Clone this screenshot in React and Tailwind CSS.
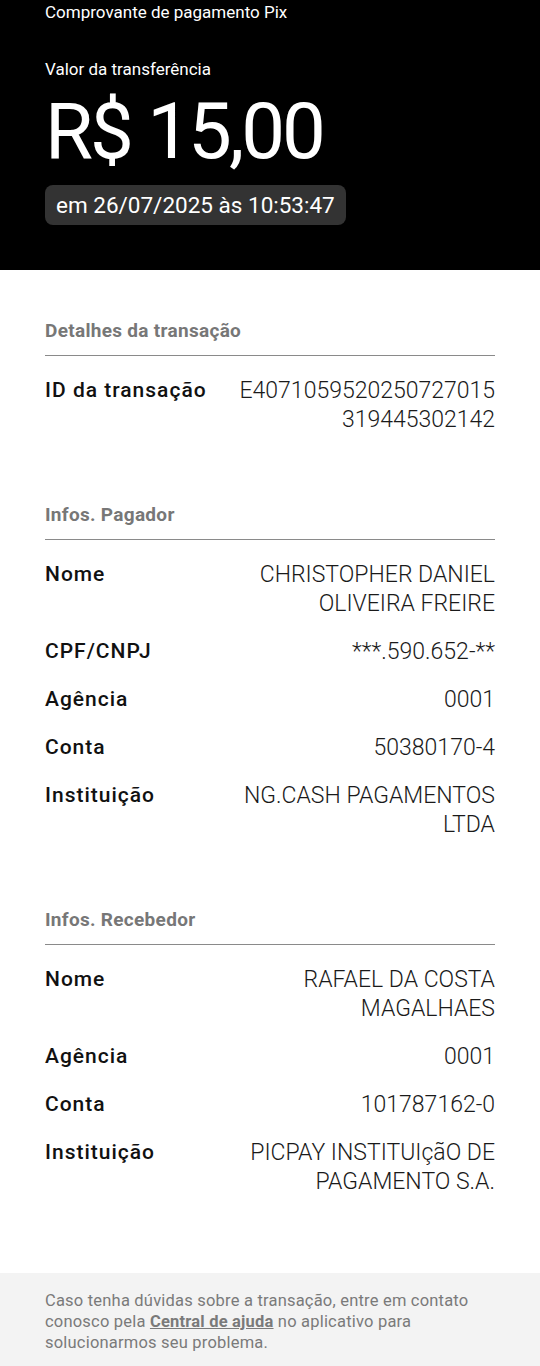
import React from "react";

const sections = [
  {
    title: "Detalhes da transação",
    rows: [{ label: "ID da transação", value: "E407105952025072701531944530 2142".replace(" ", ""), breakAll: true }],
  },
  {
    title: "Infos. Pagador",
    rows: [
      { label: "Nome", value: "CHRISTOPHER DANIEL OLIVEIRA FREIRE" },
      { label: "CPF/CNPJ", value: "***.590.652-**" },
      { label: "Agência", value: "0001" },
      { label: "Conta", value: "50380170-4" },
      { label: "Instituição", value: "NG.CASH PAGAMENTOS LTDA" },
    ],
  },
  {
    title: "Infos. Recebedor",
    rows: [
      { label: "Nome", value: "RAFAEL DA COSTA MAGALHAES" },
      { label: "Agência", value: "0001" },
      { label: "Conta", value: "101787162-0" },
      { label: "Instituição", value: "PICPAY INSTITUIçãO DE PAGAMENTO S.A." },
    ],
  },
];

const Section = ({ title, rows, last }) => (
  <div className={last ? "pb-[77px]" : "pb-[69px]"}>
    <p className="text-[19px] leading-6 font-bold tracking-[0.3px] text-[#777777]">{title}</p>
    <div className="mt-3 border-t border-[#8a8a8a]" />
    <div className="mt-5 flex flex-col gap-[19px]">
      {rows.map((row, i) => (
        <div key={i} className="flex justify-between gap-2">
          <p className="text-[21px] leading-[29px] font-medium tracking-[1px] text-[#111111] whitespace-nowrap">
            {row.label}
          </p>
          <p
            className={
              "w-[265px] shrink-0 text-right text-[23px] leading-[29px] font-light text-[#1a1a1a] " +
              (row.breakAll ? "break-all" : "")
            }
          >
            {row.value}
          </p>
        </div>
      ))}
    </div>
  </div>
);

export default function App() {
  return (
    <div className="w-[540px] min-h-[1366px] bg-white flex flex-col" style={{ fontFamily: "Roboto, 'Noto Sans', sans-serif" }}>
      {/* Header */}
      <div className="bg-black h-[270px] px-[45px] text-white">
        <p className="text-[17px] leading-6">Comprovante de pagamento Pix</p>
        <p className="mt-[33px] text-[17px] leading-6">Valor da transferência</p>
        <p className="mt-3 text-[78px] leading-[78px] tracking-[-3px]">R$ 15,00</p>
        <div className="mt-[14px] inline-flex items-center h-10 px-[11px] rounded-lg bg-[#333333]">
          <span className="text-[22.5px] leading-none">em 26/07/2025 às 10:53:47</span>
        </div>
      </div>

      {/* Details */}
      <div className="px-[45px] pt-[49px]">
        {sections.map((s, i) => (
          <Section key={i} title={s.title} rows={s.rows} last={i === sections.length - 1} />
        ))}
      </div>

      {/* Footer */}
      <div className="flex-1 bg-[#f3f3f3] px-[45px] pt-[17px] pb-4">
        <p className="text-[16.5px] leading-[21px] tracking-[0.2px] text-[#7a7a7a]">
          Caso tenha dúvidas sobre a transação, entre em contato conosco pela{" "}
          <span className="font-bold underline">Central de ajuda</span> no aplicativo para solucionarmos seu
          problema.
        </p>
      </div>
    </div>
  );
}
